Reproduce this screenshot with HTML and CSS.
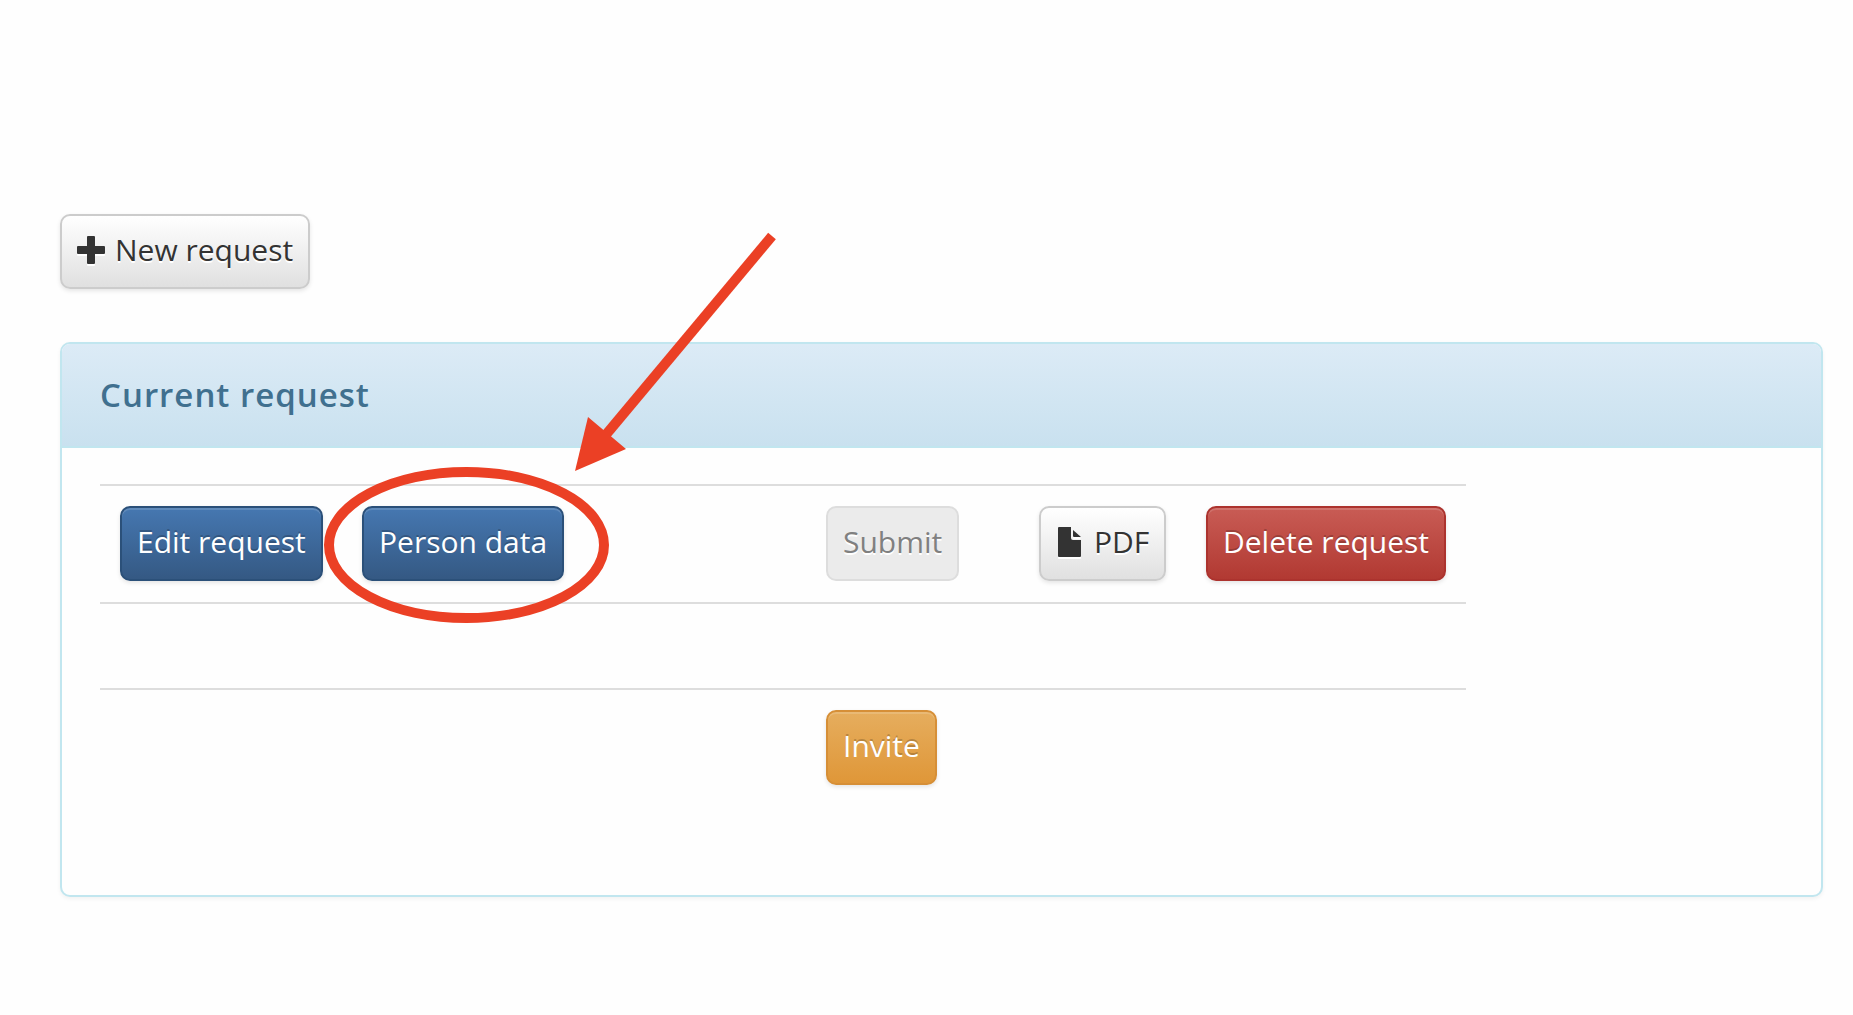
FILE: index.html
```html
<!DOCTYPE html>
<html lang="en">
<head>
<meta charset="utf-8">
<title>Requests</title>
<link rel="stylesheet" href="styles.css">
</head>
<body>
<main class="page">
  <button type="button" class="btn btn-default">
    <svg class="icon" width="28" height="28" viewBox="0 0 28 28" aria-hidden="true"><path d="M11 0h6q1 0 1 1v9h9q1 0 1 1v6q0 1-1 1h-9v9q0 1-1 1h-6q-1 0-1-1v-9H1q-1 0-1-1v-6q0-1 1-1h9V1q0-1 1-1z"/></svg>
    <span>New request</span>
  </button>

  <section class="panel">
    <header class="panel-heading"><h2 class="panel-title">Current request</h2></header>
    <div class="panel-body">
      <table class="actions">
        <colgroup>
          <col class="col-edit"><col class="col-edit"><col class="col-space"><col class="col-submit"><col class="col-gap"><col class="col-pdf"><col class="col-delete">
        </colgroup>
        <tbody>
          <tr>
            <td><button type="button" class="btn btn-primary">Edit request</button></td>
            <td>
              <div class="marked">
                <button type="button" class="btn btn-primary">Person data</button>
                <svg class="marker" width="454" height="392" viewBox="0 0 454 392" aria-hidden="true">
                  <ellipse cx="142.5" cy="313" rx="137.5" ry="73"/>
                  <path class="shaft" d="M448 4L280 205"/>
                  <path class="head" d="M251 239L264 185L302 217z"/>
                </svg>
              </div>
            </td>
            <td></td>
            <td><button type="button" class="btn btn-default" disabled>Submit</button></td>
            <td></td>
            <td>
              <button type="button" class="btn btn-default">
                <svg class="icon icon-file" width="24" height="30" viewBox="0 0 24 30" aria-hidden="true"><path d="M1 0h12v11q0 2 2 2h8v16q0 1-1 1H1q-1 0-1-1V1q0-1 1-1z"/><path d="M15 3l8 7h-7q-1 0-1-1z"/></svg>
                <span>PDF</span>
              </button>
            </td>
            <td><button type="button" class="btn btn-danger">Delete request</button></td>
          </tr>
          <tr class="row-empty"><td colspan="7"></td></tr>
          <tr>
            <td></td><td></td><td></td>
            <td><button type="button" class="btn btn-warning">Invite</button></td>
            <td></td><td></td><td></td>
          </tr>
        </tbody>
      </table>
    </div>
  </section>
</main>
</body>
</html>
```
FILE: styles.css
```css
* { box-sizing: border-box; }

body {
  margin: 0;
  background: #fefefe;
  color: #333;
  font: 30px/40px "Open Sans", "Noto Sans", sans-serif;
}

.page { padding: 214px 30px 60px 60px; }

.btn {
  display: inline-flex;
  align-items: center;
  gap: 10px;
  height: 75px;
  padding: 0 15px 3px;
  border: 2px solid;
  border-radius: 10px;
  font: inherit;
  white-space: nowrap;
  vertical-align: top;
  cursor: pointer;
}

.btn-default {
  color: #333;
  border-color: #ccc;
  background: linear-gradient(#fff, #e0e0e0);
  text-shadow: 0 2px 0 #fff;
  box-shadow: 0 2px 4px rgba(0, 0, 0, .1);
}

.btn-default:disabled {
  color: #808080;
  border-color: #ddd;
  background: #ebebeb;
  box-shadow: none;
  cursor: default;
}

.btn-primary,
.btn-warning,
.btn-danger {
  color: #fff;
  text-shadow: 0 -2px 0 rgba(0, 0, 0, .2);
  box-shadow: inset 0 2px 0 rgba(255, 255, 255, .15), 0 2px 4px rgba(0, 0, 0, .1);
}

.btn-primary {
  border-color: #2b5079;
  background: linear-gradient(#4678b2, #345882) border-box;
}

.btn-warning {
  border-color: #d68f37;
  background: linear-gradient(#e6ae5f, #df9637) border-box;
}

.btn-danger {
  border-color: #ac332e;
  background: linear-gradient(#c95d56, #b13831) border-box;
}

.icon {
  flex: none;
  fill: #333;
  filter: drop-shadow(0 2px 0 #fff);
}

.icon-file { margin: 0 2px; }

.panel {
  margin-top: 53px;
  border: 2px solid #c1e6ef;
  border-radius: 10px;
  background: #fefefe;
  box-shadow: 0 2px 4px rgba(0, 0, 0, .05);
}

.panel-heading {
  padding: 31px 38px;
  border-bottom: 2px solid #c1e6ef;
  border-radius: 8px 8px 0 0;
  background: linear-gradient(#dcebf6, #c9e1ef);
}

.panel-title {
  margin: 0;
  color: #40708f;
  font-size: 33px;
  line-height: 40px;
  font-weight: 600;
  letter-spacing: 1px;
}

.panel-body { padding: 36px 38px 89px; }

.actions {
  border-collapse: separate;
  border-spacing: 0;
  table-layout: fixed;
  width: 1366px;
  max-width: 100%;
}

.actions td {
  padding: 20px 20px 21px;
  border-top: 2px solid #ddd;
  vertical-align: top;
}

.row-empty { height: 86px; }
.col-edit { width: 242px; }
.col-space { width: 222px; }
.col-submit { width: 173px; }
.col-gap { width: 40px; }
.col-pdf { width: 167px; }
.col-delete { width: 280px; }

.marked {
  position: relative;
  width: max-content;
}

.marker {
  position: absolute;
  left: -38px;
  top: -274px;
  overflow: visible;
  fill: none;
  stroke: #eb4025;
  stroke-width: 10;
  pointer-events: none;
}

.marker .head {
  fill: #eb4025;
  stroke: none;
}
```
